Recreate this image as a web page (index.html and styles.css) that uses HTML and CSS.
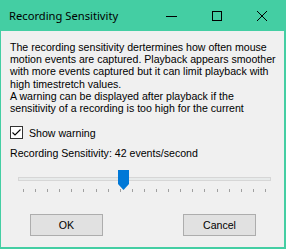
FILE: index.html
```html
<!DOCTYPE html>
<html lang="en">
<head>
  <meta charset="UTF-8">
  <title>Recording Sensitivity</title>
  <link rel="stylesheet" href="styles.css">
</head>
<body>
  <div class="window">
    <header class="titlebar">
      <span class="title">Recording Sensitivity</span>
      <div class="controls">
        <span class="ctl">
          <svg width="12" height="12" viewBox="0 0 12 12"><path d="M0 6.5H11" stroke="#000" stroke-width="1"/></svg>
        </span>
        <span class="ctl">
          <svg width="12" height="12" viewBox="0 0 12 12"><rect x="1.5" y="1.5" width="9" height="9" fill="none" stroke="#000" stroke-width="1"/></svg>
        </span>
        <span class="ctl">
          <svg width="12" height="12" viewBox="0 0 12 12"><path d="M1 1L11 11M11 1L1 11" stroke="#000" stroke-width="1"/></svg>
        </span>
      </div>
    </header>

    <main class="client">
      <p class="desc">
        The recording sensitivity dertermines how often mouse<br>
        motion events are captured. Playback appears smoother<br>
        with more events captured but it can limit playback with<br>
        high timestretch values.<br>
        A warning can be displayed after playback if the<br>
        sensitivity of a recording is too high for the current
      </p>

      <label class="check">
        <span class="box">
          <svg width="11" height="11" viewBox="0 0 11 11"><path d="M1.5 5.5L4 8L9.5 2.5" fill="none" stroke="#000" stroke-width="1.1"/></svg>
        </span>
        Show warning
      </label>

      <div class="value">Recording Sensitivity: 42 events/second</div>

      <div class="slider">
        <div class="track"></div>
        <svg class="thumb" width="11" height="20" viewBox="0 0 11 20"><polygon points="0,0 11,0 11,14 5.5,20 0,14" fill="#0078d7"/></svg>
        <div class="ticks">
          <i></i><i></i><i></i><i></i><i></i><i></i><i></i>
          <i></i><i></i><i></i><i></i><i></i><i></i><i></i>
          <i></i><i></i><i></i><i></i><i></i><i></i><i></i>
        </div>
      </div>

      <div class="buttons">
        <button>OK</button>
        <button>Cancel</button>
      </div>
    </main>
  </div>
</body>
</html>
```

FILE: styles.css
```css
body {
  margin: 0;
  padding: 0;
  overflow: hidden;
  font-family: "Liberation Sans", Arial, sans-serif;
  font-size: 10.6px;
  color: #000;
}

.window {
  width: 286px;
  height: 249px;
  box-sizing: border-box;
  background-color: #44cea3;
  display: flex;
  flex-direction: column;
  padding: 0 2px 2px 1px;
}

.titlebar {
  height: 31px;
  display: flex;
  align-items: center;
  justify-content: space-between;
  flex-shrink: 0;
}

.title {
  font-family: "Noto Sans", sans-serif;
  font-size: 11.2px;
  padding-left: 8px;
  color: #000;
}

.controls {
  display: flex;
  height: 100%;
}

.ctl {
  width: 45px;
  display: flex;
  align-items: center;
  justify-content: center;
}

.client {
  flex: 1;
  background-color: #f0f0f0;
  padding: 10px 9px 0 9px;
  display: flex;
  flex-direction: column;
}

.desc {
  margin: 0;
  line-height: 12.2px;
  white-space: nowrap;
}

.check {
  margin-top: 12px;
  display: flex;
  align-items: center;
  gap: 6px;
  height: 13px;
}

.check .box {
  width: 13px;
  height: 13px;
  box-sizing: border-box;
  border: 1px solid #333;
  background: #fff;
  display: flex;
  align-items: center;
  justify-content: center;
}

.value {
  margin-top: 8px;
  line-height: 12px;
}

.slider {
  position: relative;
  margin: 11px 0 0 8px;
  width: 253px;
  height: 23px;
}

.track {
  margin-top: 7px;
  height: 4px;
  box-sizing: border-box;
  border: 1px solid #d6d6d6;
  background: #e7eaea;
}

.thumb {
  position: absolute;
  left: 100px;
  top: 0;
}

.ticks {
  margin-top: 8px;
  padding: 0 5px;
  display: flex;
  justify-content: space-between;
}

.ticks i {
  width: 1px;
  height: 3px;
  background: #a0a0a0;
}

.buttons {
  margin-top: 21px;
  padding: 0 19px 0 20px;
  display: flex;
  justify-content: space-between;
}

.buttons button {
  width: 73px;
  height: 22px;
  background: #e1e1e1;
  border: 1px solid #adadad;
  font-family: "Liberation Sans", Arial, sans-serif;
  font-size: 10.6px;
  color: #000;
  padding: 0;
}
```
